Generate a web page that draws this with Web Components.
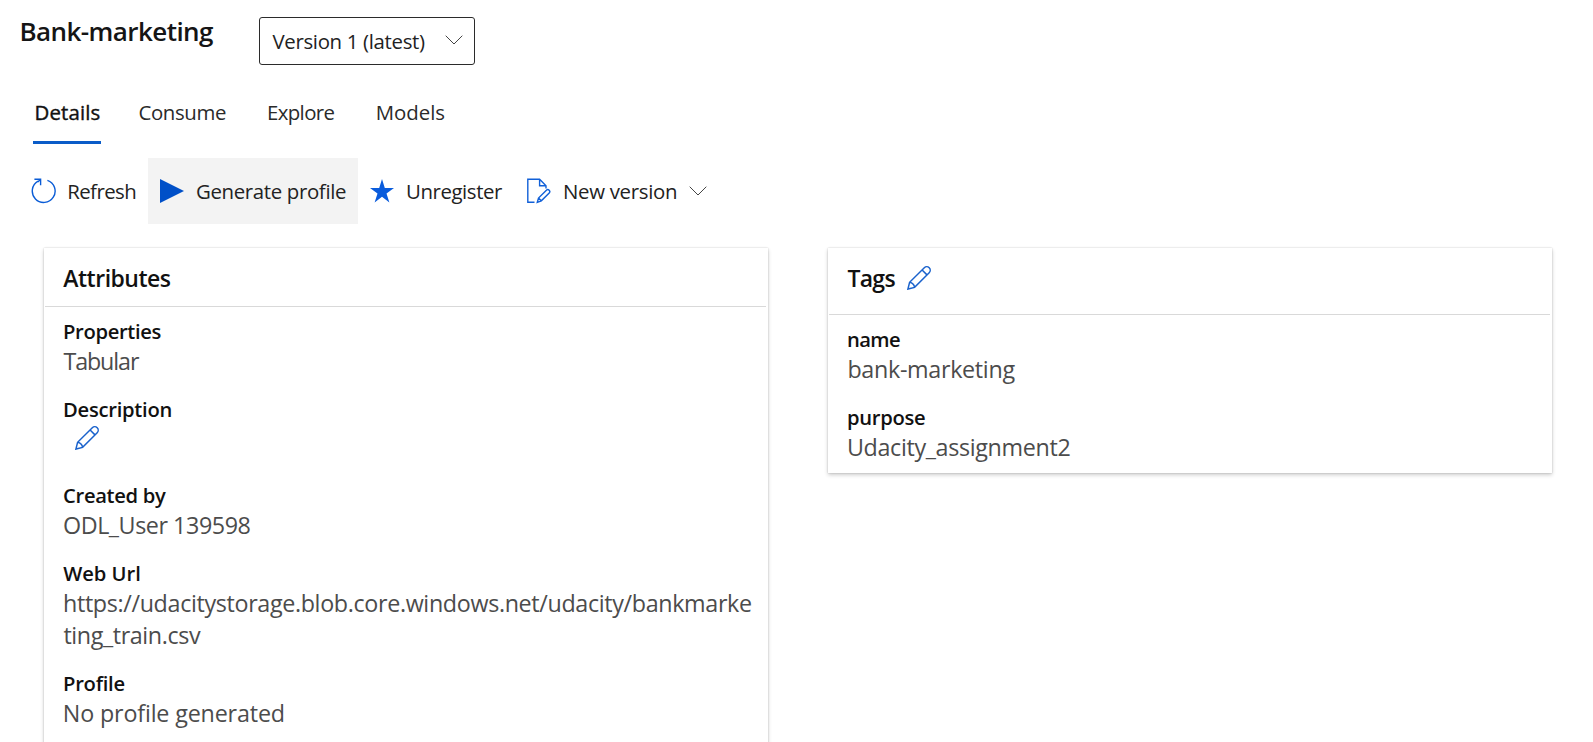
<!DOCTYPE html>
<html lang="en">
<head>
<meta charset="utf-8">
<title>Bank-marketing</title>
<style>
html,body{margin:0;height:100%;overflow:hidden;background:#fff}
body{font-family:"Open Sans","Noto Sans",sans-serif;color:#222}
</style>
</head>
<body>
<dataset-page></dataset-page>
<script>
const define = (name, html, setup) => {
  const tpl = document.createElement('template');
  tpl.innerHTML = html;
  customElements.define(name, class extends HTMLElement {
    connectedCallback() {
      if (this.shadowRoot) return;
      this.attachShadow({mode: 'open'}).append(tpl.content.cloneNode(true));
      if (setup) setup(this, this.shadowRoot);
    }
  });
};

/* A single line of text tracked to occupy a given width. */
const ctx = document.createElement('canvas').getContext('2d');
define('fit-text', `<style>:host{display:block;flex:none;white-space:nowrap}span{display:block}</style><span><slot></slot></span>`, (el, root) => {
  const w = parseFloat(el.getAttribute('w')), cs = getComputedStyle(el), text = el.textContent;
  ctx.font = cs.fontWeight + ' ' + cs.fontSize + ' ' + cs.fontFamily;
  const m = ctx.measureText(text);
  const ink = m.actualBoundingBoxLeft + m.actualBoundingBoxRight;
  const span = root.querySelector('span');
  el.style.width = w + 'px';
  span.style.marginLeft = (m.actualBoundingBoxLeft + parseFloat(el.getAttribute('dx') || 0)) + 'px';
  span.style.letterSpacing = ((w - ink) / (text.length - 1)).toFixed(3) + 'px';
});

const icons = {
  chevron: [18, 10, '<path d="M.7.7 9 9 17.3.7" fill="none" stroke="#444" stroke-width="1"/>'],
  refresh: [26, 26, '<path d="M16.4 2.3A11.4 11.4 0 1 1 7 3.2M3.4 1.3H9.6V7.2M9.6 1.3 6.8 4" fill="none" stroke="#0a5cd6" stroke-width="1.4"/>'],
  play: [24, 24, '<path d="M0 0 24 12 0 24z" fill="#0050c8"/>'],
  star: [24, 24, '<path d="M12 0 14.8 9H24L16.5 14.4 19.4 23.4 12 17.8 4.6 23.4 7.5 14.4 0 9H9.2z" fill="#0a5cdc"/>'],
  page: [24, 26, '<path d="M7.5 24.3H.8V1.3H12.6L19 7.7V10.5M12.6 1.3V7.7H19M10.3 24.3 11.5 20 19.4 12.2A1.9 1.9 0 0 1 22.2 14.9L14.3 22.8zM11.5 20 14.3 22.8" fill="none" stroke="#1160d8" stroke-width="1.4"/>'],
  pencil: [24, 24, '<path d="M.9 23.1 2.6 16.3 17.3 1.8A3.1 3.1 0 0 1 22.2 6.7L7.6 21.4zM2.6 16.3Q6.9 17.1 7.6 21.4M15.1 4 20 8.9" fill="none" stroke="#1a62cc" stroke-width="1.5"/>']
};
define('ui-icon', `<style>:host{display:block;flex:none}svg{display:block}</style><svg></svg>`, (el, root) => {
  const [w, h, body] = icons[el.getAttribute('name')], svg = root.querySelector('svg');
  svg.setAttribute('width', w); svg.setAttribute('height', h);
  svg.setAttribute('viewBox', `0 0 ${w} ${h}`); svg.innerHTML = body;
});

define('version-select', `<style>
:host{display:flex;box-sizing:border-box;width:216px;height:48px;border:1px solid #2b2b2b;border-radius:3px;align-items:center;justify-content:space-between;padding:0 11px 0 13px;font-size:20.4px;line-height:28px}
ui-icon{margin-top:-2px}
</style><slot></slot><ui-icon name="chevron"></ui-icon>`);

define('tab-item', `<style>
:host{display:block;flex:none;font-size:20.4px;line-height:28px;padding:0 2px 15px;border-bottom:3px solid transparent;color:#2a2a2a}
:host([selected]){border-color:#0a5cc8;color:#111;-webkit-text-stroke:.4px #111}
</style><slot></slot>`);

define('tool-button', `<style>
:host{display:flex;flex:none;box-sizing:border-box;height:66px;align-items:center;gap:var(--gap,12px);padding:0 12px;font-size:20.4px;line-height:28px}
:host([active]){background:#f3f3f3}
</style><slot></slot>`);

define('info-card', `<style>
:host{display:block;box-sizing:border-box;width:724px;min-height:var(--min,0);flex:none;background:#fff;box-shadow:0 1.5px 4px rgba(0,0,0,.2),0 0 1.5px rgba(0,0,0,.2)}
header{display:flex;box-sizing:border-box;align-items:flex-start;gap:11px;padding:14px 20px 0;height:var(--head,58px);font-size:23px;line-height:32px;font-weight:600;color:#111}
.rule{height:1px;background:#d9d9d9;margin:0 2px 0 1px}
.body{display:flex;flex-direction:column;gap:18px;padding:10px 15px 10px 20px}
</style><header><slot name="title"></slot></header><div class="rule"></div><div class="body"><slot></slot></div>`);

define('info-row', `<style>
:host{display:block}
.label{font-size:20.2px;line-height:28px;font-weight:600;color:#111}
.value{font-size:23.3px;line-height:32px;color:#4c4c4c}
</style><div class="label"><slot name="label"></slot></div><div class="value"><slot></slot></div>`);

define('dataset-page', `<style>
:host{display:flow-root;height:742px;overflow:hidden}
.top{display:flex;align-items:flex-start;padding:13px 0 0 21px}
.top h1{margin:0;font-size:26px;line-height:36px;font-weight:600;color:#151515}
version-select{margin:4px 0 0 46px}
nav{display:flex;padding:33px 0 0 33px}
.tools{display:flex;margin-top:14px;padding-left:19px}
.cards{display:flex;align-items:flex-start;gap:60px;padding:24px 0 0 44px}
.edit{height:40px;padding:3px 0 0 11px;box-sizing:border-box}
</style>
<div class="top"><h1><fit-text w="191.5" dx=".5">Bank-marketing</fit-text></h1>
<version-select><fit-text w="152.5">Version 1 (latest)</fit-text></version-select></div>
<nav>
<tab-item selected><fit-text w="64" dx=".5">Details</fit-text></tab-item>
<tab-item style="margin-left:36px"><fit-text w="86.5" dx=".5">Consume</fit-text></tab-item>
<tab-item style="margin-left:38.5px"><fit-text w="66.5">Explore</fit-text></tab-item>
<tab-item style="margin-left:39px"><fit-text w="67.5" dx="-.7">Models</fit-text></tab-item>
</nav>
<div class="tools">
<tool-button><ui-icon name="refresh"></ui-icon><fit-text w="67" dx="-.8">Refresh</fit-text></tool-button>
<tool-button active style="--gap:13px"><ui-icon name="play"></ui-icon><fit-text w="149">Generate profile</fit-text></tool-button>
<tool-button style="--gap:13px"><ui-icon name="star"></ui-icon><fit-text w="96">Unregister</fit-text></tool-button>
<tool-button style="--gap:13px"><ui-icon name="page"></ui-icon><fit-text w="112">New version</fit-text><ui-icon name="chevron"></ui-icon></tool-button>
</div>
<div class="cards">
<info-card style="--min:520px">
<fit-text slot="title" w="107.5" dx="-.7">Attributes</fit-text>
<info-row><fit-text slot="label" w="96.5">Properties</fit-text><fit-text w="76.5" dx="-.6">Tabular</fit-text></info-row>
<info-row><fit-text slot="label" w="107.5">Description</fit-text><div class="edit"><ui-icon name="pencil"></ui-icon></div></info-row>
<info-row><fit-text slot="label" w="102">Created by</fit-text><fit-text w="186.5">ODL_User 139598</fit-text></info-row>
<info-row><fit-text slot="label" w="76" dx="-.8">Web Url</fit-text><fit-text w="687">https://udacitystorage.blob.core.windows.net/udacity/bankmarke</fit-text><fit-text w="137.5" dx="-.6">ting_train.csv</fit-text></info-row>
<info-row><fit-text slot="label" w="60.5">Profile</fit-text><fit-text w="219" dx=".8">No profile generated</fit-text></info-row>
</info-card>
<info-card style="--head:66px">
<fit-text slot="title" w="48" dx="-.6">Tags</fit-text><ui-icon slot="title" name="pencil" style="margin-top:4px"></ui-icon>
<info-row><fit-text slot="label" w="52">name</fit-text><fit-text w="167" dx=".4">bank-marketing</fit-text></info-row>
<info-row><fit-text slot="label" w="77">purpose</fit-text><fit-text w="221.5" dx=".9">Udacity_assignment2</fit-text></info-row>
</info-card>
</div>`);
</script>
</body>
</html>
